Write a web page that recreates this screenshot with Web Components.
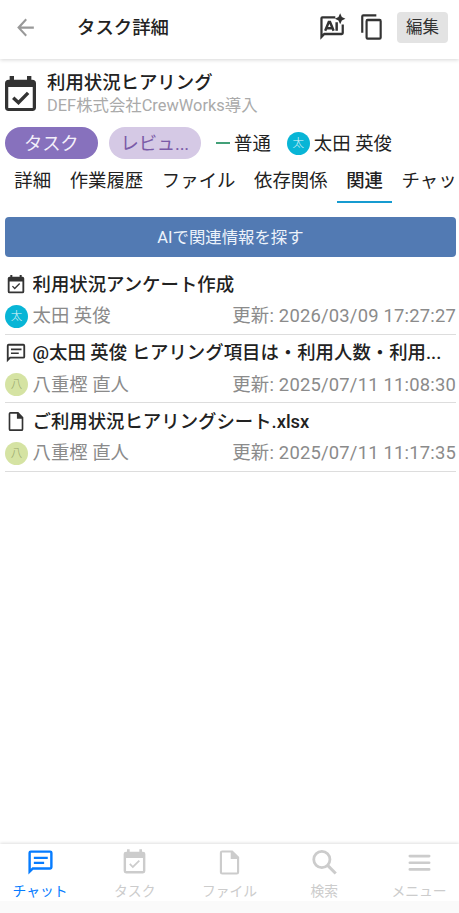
<!DOCTYPE html>
<html lang="ja">
<head>
<meta charset="utf-8">
<title>タスク詳細</title>
<style>
  body {
    margin: 0;
    background: #fff;
    color: #222;
    font-family: Roboto, "Noto Sans CJK JP", sans-serif;
    font-size: 18.4px;
  }
</style>
</head>
<body>
<task-page></task-page>

<script>
const icons = {
  back: '<path d="M20 11H7.8l5.6-5.6L12 4l-8 8 8 8 1.4-1.4L7.8 13H20z"/>',
  copy: '<path d="M16 1H4a2 2 0 0 0-2 2v14h2V3h12zm3 4H8a2 2 0 0 0-2 2v14a2 2 0 0 0 2 2h11a2 2 0 0 0 2-2V7a2 2 0 0 0-2-2zm0 16H8V7h11z"/>',
  ai: '<path d="M14.5 2.8H3A1.800 1.800 0 0 0 1.200 4.600V23l3.800-4H20.300a1.800 1.800 0 0 0 1.800-1.800V9.800h-2V17H4.300l-1.100 1.100V4.800h11.300z"/><path d="M18.800.2l1.500 3.200 3.200 1.500-3.200 1.500-1.500 3.200-1.500-3.200-3.200-1.500 3.200-1.500z"/><path d="M5.500 15.300L8.700 7.800h1.100l3.200 7.500M7 13h4.500M15.700 8v7.300" fill="none" stroke="currentColor" stroke-width="2.200"/>',
  task: '<path d="M19 3h-.8V1h-2.200v2H8V1H5.800v2H5a2 2 0 0 0-2 2v14a2 2 0 0 0 2 2h14a2 2 0 0 0 2-2V5a2 2 0 0 0-2-2zm0 16H5V8.200h14z"/><path d="M16.500 10.900l-1-1-4.900 4.800-2-2-1 1 3 3.100z"/>',
  calendar: '<path d="M19.500 3.500H19V1h-2.800v2.500H7.800V1H5v2.500h-.5A2.500 2.500 0 0 0 2 6v16a2.300 2.300 0 0 0 2.300 2.300h15.400A2.300 2.300 0 0 0 22 22V6a2.500 2.500 0 0 0-2.500-2.500zM19.900 22.300H4.100V8.300h15.800z"/><path d="M7.300 15.500l3.400 3.300 6.200-6.500" fill="none" stroke="currentColor" stroke-width="2.200"/>',
  chat: '<path d="M4 4v13.200L5.200 16H20V4zm0-2h16a2 2 0 0 1 2 2v12a2 2 0 0 1-2 2H6l-4 4V4a2 2 0 0 1 2-2zm2.500 5.200h11.500v1.800H6.500zm0 4.200h8.500v1.800H6.500z"/>',
  file: '<path d="M14.500 2H6a2 2 0 0 0-2 2v16a2 2 0 0 0 2 2h12a2 2 0 0 0 2-2V7.500zM5.800 20.200V3.800H13V9h5.200v11.200z"/>',
  search: '<circle cx="9.800" cy="9.500" r="6.700" fill="none" stroke="currentColor" stroke-width="2.300"/><path d="M14.600 14.400l6.700 6.700" fill="none" stroke="currentColor" stroke-width="2.500"/>',
  menu: '<path d="M4 6.700h16M4 12.200h16M4 17.700h16" fill="none" stroke="currentColor" stroke-width="2.200" stroke-linecap="round"/>'
};

class AppIcon extends HTMLElement {
  connectedCallback() {
    const box = this.getAttribute("box") || "0 0 24 24";
    this.attachShadow({ mode: "open" }).innerHTML = `
      <style>
        :host { display: block; flex: none; width: 24px; height: 24px; }
        svg { display: block; width: 100%; height: 100%; fill: currentColor; overflow: visible; }
      </style>
      <svg viewBox="${box}" preserveAspectRatio="none">${icons[this.getAttribute("name")]}</svg>`;
  }
}

class UserAvatar extends HTMLElement {
  connectedCallback() {
    this.attachShadow({ mode: "open" }).innerHTML = `
      <style>
        :host {
          display: flex;
          flex: none;
          align-items: center;
          justify-content: center;
          width: 23px;
          height: 23px;
          border-radius: 50%;
          background: #08b5d6;
          color: #e2f8fc;
          font-size: 11.5px;
          font-weight: 300;
          line-height: 23px;
        }
        :host([tone="lime"]) { background: #d5e3a3; color: #98a66b; }
      </style>
      <slot></slot>`;
  }
}

class PageHeader extends HTMLElement {
  connectedCallback() {
    this.attachShadow({ mode: "open" }).innerHTML = `
      <style>
        :host {
          display: flex;
          align-items: center;
          box-sizing: border-box;
          height: 59px;
          padding: 0 11px 5px 13px;
          background: #fff;
          box-shadow: 0 1px 4px rgba(0, 0, 0, .16);
        }
        h1 { flex: 1; margin: 2px 0 0 39px; font-size: 18.4px; font-weight: 500; line-height: 28px; }
        .back { width: 25px; height: 27px; color: #999; }
        .ai { width: 27px; height: 28px; margin-right: 13px; color: #333; }
        .copy { width: 26px; height: 28px; margin-right: 12px; color: #333; }
        button {
          width: 51px;
          height: 31px;
          padding: 0;
          border: 0;
          border-radius: 4px;
          background: #e3e3e3;
          color: #333;
          font: inherit;
          font-size: 16.5px;
          line-height: 31px;
        }
      </style>
      <app-icon class="back" name="back"></app-icon>
      <h1><slot></slot></h1>
      <app-icon class="ai" name="ai"></app-icon>
      <app-icon class="copy" name="copy"></app-icon>
      <button>編集</button>`;
  }
}

class TaskSummary extends HTMLElement {
  connectedCallback() {
    this.attachShadow({ mode: "open" }).innerHTML = `
      <style>
        :host { display: block; padding: 11px 5px 0; }
        .head { display: flex; height: 46px; }
        .head app-icon { width: 31px; height: 35px; margin: 6px 11px 0 0; color: #333; }
        h2 { margin: 0; font-size: 18.4px; font-weight: 500; line-height: 25px; }
        p { margin: 0; color: #aaa; font-size: 16.4px; line-height: 21px; }
        .status { display: flex; align-items: center; height: 34px; margin-top: 10px; line-height: 33px; }
        .pill { box-sizing: border-box; width: 92.5px; height: 32px; border-radius: 16px; text-align: center; line-height: 33px; letter-spacing: -.2px; }
        .type { background: #8771bd; color: #f3effa; }
        .state { margin-left: 11px; background: #d5c9e5; color: #7b5ba8; }
        .dash { width: 14px; height: 2px; margin: 0 4px 0 15px; background: #43a078; }
        user-avatar { margin: 0 4px 0 16px; }
      </style>
      <div class="head">
        <app-icon name="calendar" box="2 1 20 23.3"></app-icon>
        <div>
          <h2>利用状況ヒアリング</h2>
          <p>DEF株式会社CrewWorks導入</p>
        </div>
      </div>
      <div class="status">
        <span class="pill type">タスク</span>
        <span class="pill state">レビュ...</span>
        <span class="dash"></span>
        <span>普通</span>
        <user-avatar>太</user-avatar>
        <span>太田 英俊</span>
      </div>`;
  }
}

class TabItem extends HTMLElement {
  connectedCallback() {
    this.attachShadow({ mode: "open" }).innerHTML = `
      <style>
        :host {
          display: block;
          flex: none;
          box-sizing: border-box;
          height: 43px;
          padding: 0 9.3px;
          border-bottom: 2px solid transparent;
          line-height: 41px;
          white-space: nowrap;
        }
        :host([active]) { border-color: #169bd0; font-weight: 500; }
      </style>
      <slot></slot>`;
  }
}

class TabBar extends HTMLElement {
  connectedCallback() {
    this.attachShadow({ mode: "open" }).innerHTML = `
      <style>
        :host { display: flex; height: 43px; padding-left: 5px; overflow: hidden; }
      </style>
      <slot></slot>`;
  }
}

class RelatedItem extends HTMLElement {
  connectedCallback() {
    this.attachShadow({ mode: "open" }).innerHTML = `
      <style>
        :host {
          display: block;
          box-sizing: border-box;
          height: 68.6px;
          border-bottom: 1px solid #ddd;
        }
        .title { display: flex; align-items: center; height: 37px; font-weight: 500; }
        .title app-icon { width: 22px; height: 22px; margin-right: 5.5px; color: #333; }
        .title app-icon[name="file"] { height: 23px; }
        .name { flex: 1; min-width: 0; overflow: hidden; white-space: nowrap; line-height: 38px; }
        .meta { display: flex; align-items: center; height: 26px; color: #8b8b8b; line-height: 26px; }
        user-avatar { margin-right: 4.5px; }
        .date { margin-left: auto; letter-spacing: .2px; }
      </style>
      <div class="title">
        <app-icon name="${this.getAttribute("icon")}"></app-icon>
        <span class="name"><slot></slot></span>
      </div>
      <div class="meta">
        <user-avatar tone="${this.getAttribute("tone") || ""}">${this.getAttribute("user")[0]}</user-avatar>
        <span>${this.getAttribute("user")}</span>
        <span class="date">更新: ${this.getAttribute("date")}</span>
      </div>`;
  }
}

class NavItem extends HTMLElement {
  connectedCallback() {
    this.attachShadow({ mode: "open" }).innerHTML = `
      <style>
        :host {
          display: flex;
          flex: none;
          flex-direction: column;
          align-items: center;
          width: 80px;
          padding-top: 4px;
          color: #ccc;
          font-size: 13.8px;
          line-height: 20px;
          white-space: nowrap;
        }
        :host([active]) { color: #067cff; }
        app-icon { width: 29px; height: 29px; margin-bottom: 4px; }
      </style>
      <app-icon name="${this.getAttribute("icon")}"></app-icon>
      <slot></slot>`;
  }
}

class BottomNav extends HTMLElement {
  connectedCallback() {
    this.attachShadow({ mode: "open" }).innerHTML = `
      <style>
        :host {
          display: flex;
          justify-content: space-between;
          box-sizing: border-box;
          height: 69px;
          border-bottom: 12px solid #fafafa;
          background: #fff;
          box-shadow: 0 -1px 3px rgba(0, 0, 0, .13);
        }
      </style>
      <slot></slot>`;
  }
}

class TaskPage extends HTMLElement {
  connectedCallback() {
    this.attachShadow({ mode: "open" }).innerHTML = `
      <style>
        :host { display: flex; flex-direction: column; height: 913px; overflow: hidden; }
        main { flex: 1; padding: 0 3px 0 5px; }
        .search {
          display: block;
          width: 100%;
          height: 40px;
          margin: 14px 0 9px;
          padding: 0;
          border: 0;
          border-radius: 4px;
          background: #527ab3;
          color: #edf3fb;
          font: inherit;
          font-size: 16.4px;
          line-height: 39px;
        }
      </style>
      <page-header>タスク詳細</page-header>
      <task-summary></task-summary>
      <tab-bar>
        <tab-item>詳細</tab-item>
        <tab-item>作業履歴</tab-item>
        <tab-item>ファイル</tab-item>
        <tab-item>依存関係</tab-item>
        <tab-item active>関連</tab-item>
        <tab-item>チャッ</tab-item>
      </tab-bar>
      <main>
        <button class="search">AIで関連情報を探す</button>
        <related-item icon="task" user="太田 英俊" date="2026/03/09 17:27:27">利用状況アンケート作成</related-item>
        <related-item icon="chat" user="八重樫 直人" tone="lime" date="2025/07/11 11:08:30">@太田 英俊 ヒアリング項目は・利用人数・利用...</related-item>
        <related-item icon="file" user="八重樫 直人" tone="lime" date="2025/07/11 11:17:35">ご利用状況ヒアリングシート.xlsx</related-item>
      </main>
      <bottom-nav>
        <nav-item icon="chat" active>チャット</nav-item>
        <nav-item icon="task">タスク</nav-item>
        <nav-item icon="file">ファイル</nav-item>
        <nav-item icon="search">検索</nav-item>
        <nav-item icon="menu">メニュー</nav-item>
      </bottom-nav>`;
  }
}

customElements.define("app-icon", AppIcon);
customElements.define("user-avatar", UserAvatar);
customElements.define("page-header", PageHeader);
customElements.define("task-summary", TaskSummary);
customElements.define("tab-item", TabItem);
customElements.define("tab-bar", TabBar);
customElements.define("related-item", RelatedItem);
customElements.define("nav-item", NavItem);
customElements.define("bottom-nav", BottomNav);
customElements.define("task-page", TaskPage);
</script>
</body>
</html>
